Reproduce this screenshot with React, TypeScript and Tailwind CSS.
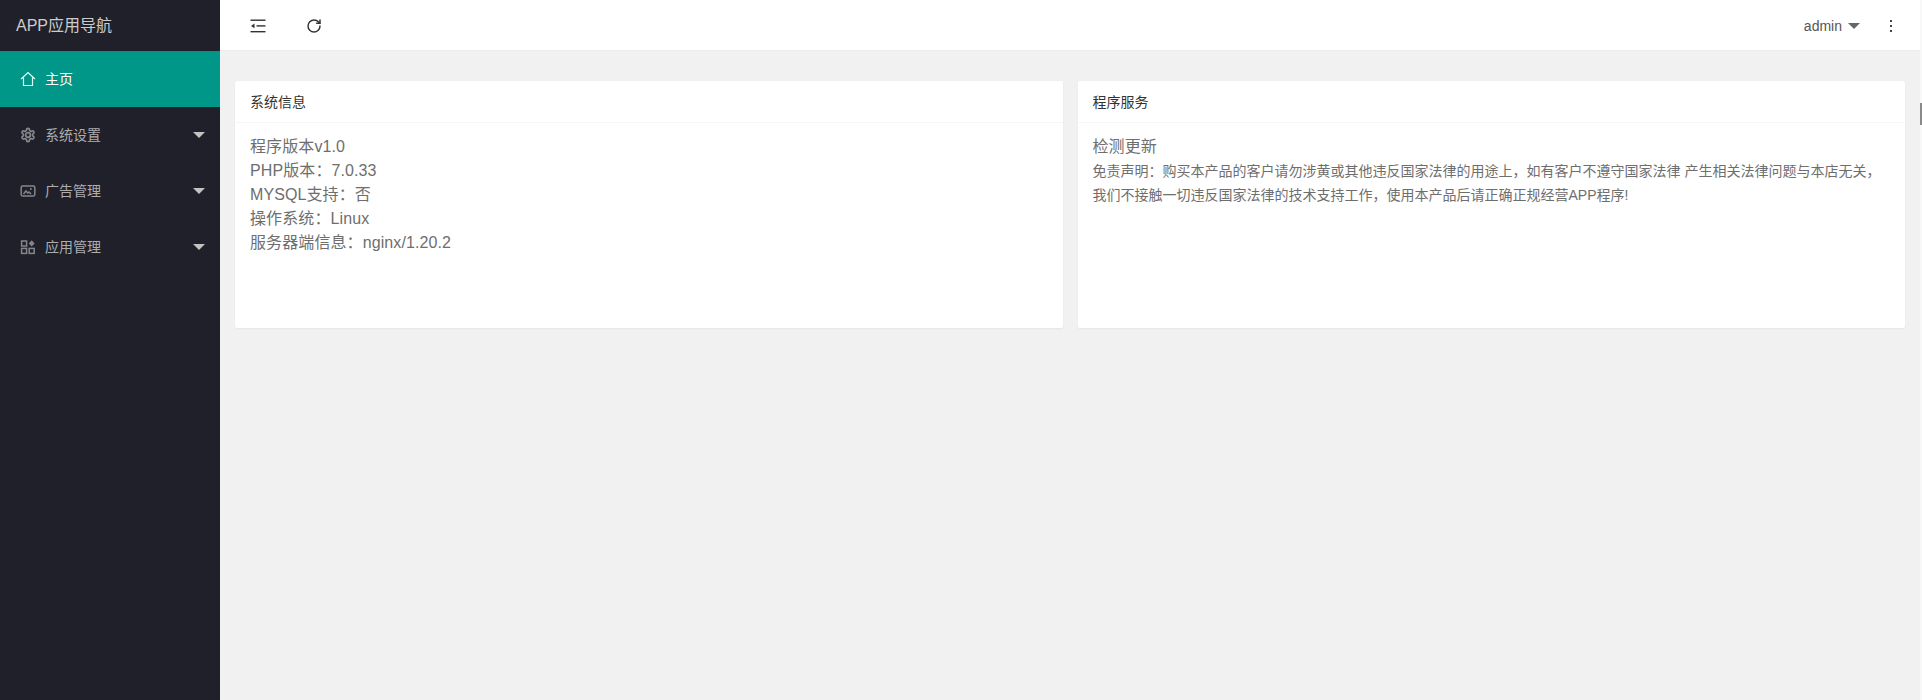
import { RotateCw } from "lucide-react";
import type { ReactNode } from "react";

const HomeIcon = () => (
  <svg width="16" height="16" viewBox="0 0 16 16" fill="none" stroke="currentColor" strokeWidth="1.2">
    <path d="M1 8 8 1.5 15 8M3.5 6.5V14.5H12.5V6.5" />
  </svg>
);

const GearIcon = () => (
  <svg width="16" height="16" viewBox="0 0 24 24" fill="none" stroke="currentColor" strokeWidth="2.6">
    <path d="M12.2 2h-.4a2 2 0 0 0-2 2v.2a2 2 0 0 1-1 1.7l-.4.3a2 2 0 0 1-2 0l-.2-.1a2 2 0 0 0-2.7.7l-.2.4a2 2 0 0 0 .7 2.7l.2.1a2 2 0 0 1 1 1.7v.5a2 2 0 0 1-1 1.7l-.2.1a2 2 0 0 0-.7 2.7l.2.4a2 2 0 0 0 2.7.7l.2-.1a2 2 0 0 1 2 0l.4.3a2 2 0 0 1 1 1.7v.2a2 2 0 0 0 2 2h.4a2 2 0 0 0 2-2v-.2a2 2 0 0 1 1-1.7l.4-.3a2 2 0 0 1 2 0l.2.1a2 2 0 0 0 2.7-.7l.2-.4a2 2 0 0 0-.7-2.7l-.2-.1a2 2 0 0 1-1-1.7v-.5a2 2 0 0 1 1-1.7l.2-.1a2 2 0 0 0 .7-2.7l-.2-.4a2 2 0 0 0-2.7-.7l-.2.1a2 2 0 0 1-2 0l-.4-.3a2 2 0 0 1-1-1.7V4a2 2 0 0 0-2-2Z" />
    <circle cx="12" cy="12" r="3.5" />
  </svg>
);

const PictureIcon = () => (
  <svg width="16" height="16" viewBox="0 0 16 16" fill="none" stroke="currentColor" strokeWidth="1.5">
    <rect x="1.2" y="3" width="13.6" height="10" rx="1.6" />
    <path d="M3.5 11 6 8l1.8 2 1.2-1 2 2" />
    <circle cx="10.8" cy="6" r="1" fill="currentColor" stroke="none" />
  </svg>
);

const AppsIcon = () => (
  <svg width="16" height="16" viewBox="0 0 16 16" fill="none" stroke="currentColor" strokeWidth="1.5">
    <rect x="1.6" y="2" width="5" height="5" />
    <rect x="1.6" y="9.4" width="5" height="5" />
    <rect x="9.2" y="9.4" width="5" height="5" />
    <path d="M11.7 1.2 14.6 4.4 11.7 7.6 8.8 4.4Z" fill="currentColor" stroke="none" />
  </svg>
);

const ShrinkIcon = () => (
  <svg width="16" height="14" viewBox="0 0 16 14" fill="#333">
    <rect x="0.5" y="0.5" width="15" height="1.4" />
    <rect x="0.5" y="12" width="15" height="1.4" />
    <rect x="6.5" y="6.2" width="9" height="1.4" />
    <path d="M1 6.9 4.5 4.5v4.8Z" />
  </svg>
);

const menu: { label: string; icon: ReactNode }[] = [
  { label: "系统设置", icon: <GearIcon /> },
  { label: "广告管理", icon: <PictureIcon /> },
  { label: "应用管理", icon: <AppsIcon /> },
];

const Card = ({ title, children }: { title: string; children: ReactNode }) => (
  <section className="h-[247px] rounded-[2px] bg-white shadow-[0_1px_2px_rgba(0,0,0,0.05)]">
    <h2 className="h-[42px] border-b border-[#f6f6f6] px-[15px] text-sm leading-[42px] font-normal text-[#333]">
      {title}
    </h2>
    <div className="px-[15px] py-3 tracking-[0.1px] text-[#6e6e6e]">{children}</div>
  </section>
);

export default function App() {
  return (
    <div className="flex h-[700px] overflow-hidden bg-[#f1f1f1] font-['Liberation_Sans','Noto_Sans_CJK_SC',sans-serif]">
      {/* Sidebar */}
      <aside className="w-[220px] shrink-0 bg-[#20202a]">
        <div className="h-[51px] pl-4 text-base leading-[52px] text-[#ccc]">APP应用导航</div>
        <div className="flex h-[56px] items-center gap-[9px] bg-[#009688] pl-5 text-sm text-white">
          <span className="text-[#d8fff8]">
            <HomeIcon />
          </span>
          主页
        </div>
        {menu.map((item) => (
          <div key={item.label} className="flex h-[56px] items-center gap-[9px] pl-5 pr-[15px] text-sm text-[#adadb0]">
            <span className="text-[#85868b]">{item.icon}</span>
            <span className="flex-1">{item.label}</span>
            <span className="h-0 w-0 border-x-[6px] border-t-[6px] border-x-transparent border-t-[#c2c2c2]" />
          </div>
        ))}
      </aside>

      {/* Main */}
      <div className="flex w-[1700px] shrink-0 flex-col">
        <header className="flex h-[51px] items-center border-b border-[#ececec] bg-white pt-[2px] pl-[30px] pr-7">
          <ShrinkIcon />
          <RotateCw className="ml-10 text-[#333]" size={16} strokeWidth={2.2} />
          <span className="ml-auto text-sm text-[#555]">admin</span>
          <span className="ml-[6px] h-0 w-0 border-x-[6px] border-t-[6px] border-x-transparent border-t-[#666]" />
          <span className="ml-[30px] flex flex-col gap-[3px]">
            <i className="block h-[2px] w-[2px] bg-[#444]" />
            <i className="block h-[2px] w-[2px] bg-[#444]" />
            <i className="block h-[2px] w-[2px] bg-[#444]" />
          </span>
        </header>
        <main className="grid grid-cols-2 gap-[15px] p-[15px] pt-[30px]">
          <Card title="系统信息">
            <p>程序版本v1.0</p>
            <p>PHP版本：7.0.33</p>
            <p>MYSQL支持：否</p>
            <p>操作系统：Linux</p>
            <p>服务器端信息：nginx/1.20.2</p>
          </Card>
          <Card title="程序服务">
            <p>检测更新</p>
            <p className="text-sm leading-6 tracking-normal">
              免责声明：购买本产品的客户请勿涉黄或其他违反国家法律的用途上，如有客户不遵守国家法律 产生相关法律问题与本店无关，
              <br />
              我们不接触一切违反国家法律的技术支持工作，使用本产品后请正确正规经营APP程序!
            </p>
          </Card>
        </main>
      </div>

      {/* Page scrollbar sliver */}
      <div className="flex-1 bg-[#f8f8f8] pt-[103px]">
        <div className="h-[22px] bg-[#8a8a8a]" />
      </div>
    </div>
  );
}
